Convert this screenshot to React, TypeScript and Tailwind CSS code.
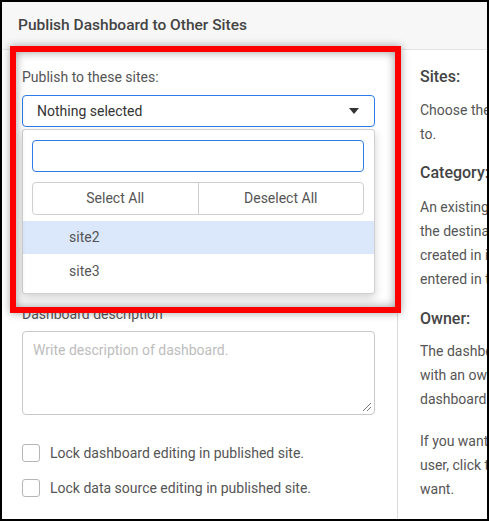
import React from "react";

function Caret() {
  return (
    <svg width="10" height="6" viewBox="0 0 10 6" className="shrink-0">
      <path d="M0 0 L10 0 L5 6 Z" fill="#333" />
    </svg>
  );
}

function Checkbox({ label }: { label: string }) {
  return (
    <div className="flex items-center h-[18px]">
      <span className="w-[18px] h-[18px] rounded-[3px] border border-[#b5b5b5] bg-white shrink-0" />
      <span className="ml-[10px] text-[14px] text-[#555] whitespace-nowrap">{label}</span>
    </div>
  );
}

export default function App() {
  return (
    <div
      className="relative w-[489px] h-[521px] overflow-hidden bg-white border-2 border-black"
      style={{ fontFamily: "Roboto, 'Liberation Sans', sans-serif" }}
    >
      {/* Header */}
      <div className="h-[48px] bg-[#f7f7f7] border-b border-[#e3e3e3] flex items-center pl-[16px]">
        <span className="text-[15.5px] font-medium text-[#444]">Publish Dashboard to Other Sites</span>
      </div>

      {/* Body */}
      <div className="flex h-[469px]">
        {/* Left form column */}
        <div className="relative w-[396px] shrink-0 border-r border-[#dcdcdc] pl-[20px] pt-[18px]">
          <div className="text-[14px] leading-[18px] text-[#555]">Publish to these sites:</div>
          <div className="mt-[9px] w-[353px] h-[32px] rounded-[4px] border border-[#2b7de9] flex items-center justify-between pl-[14px] pr-[15px]">
            <span className="text-[14px] text-[#333]">Nothing selected</span>
            <Caret />
          </div>
          <div className="h-[15px] text-[13px] leading-[15px] text-[#e53935]">
            Please select at least one publish site.
          </div>

          {/* Fields hidden behind the open menu */}
          <div className="mt-[6px] text-[14px] leading-[18px] text-[#555]">Category</div>
          <div className="mt-[8px] w-[353px] h-[32px] rounded-[4px] border border-[#ccc]" />
          <div className="mt-[23px] text-[14px] leading-[18px] text-[#555]">Owner</div>
          <div className="mt-[8px] w-[353px] h-[32px] rounded-[4px] border border-[#ccc]" />

          <div className="mt-[18px] text-[14px] leading-[18px] text-[#555]">Dashboard description</div>
          <div className="relative mt-[8px] w-[353px] h-[84px] rounded-[4px] border border-[#c8c8c8] px-[10px] pt-[6px]">
            <span className="text-[14px] text-[#bdbdbd]">Write description of dashboard.</span>
            <svg width="10" height="10" viewBox="0 0 10 10" className="absolute right-[2px] bottom-[2px]">
              <path d="M1 9 L9 1 M5 9 L9 5" stroke="#777" strokeWidth="1" />
            </svg>
          </div>

          <div className="mt-[29px]">
            <Checkbox label="Lock dashboard editing in published site." />
          </div>
          <div className="mt-[17px]">
            <Checkbox label="Lock data source editing in published site." />
          </div>

          {/* Open multiselect menu */}
          <div className="absolute left-[20px] top-[79px] w-[353px] h-[165px] bg-white border border-[#d0d0d0] rounded-[3px] shadow-[0_4px_10px_rgba(0,0,0,0.18)] pt-[10px]">
            <div className="mx-[9px] w-[332px] h-[32px] rounded-[4px] border border-[#2b7de9]" />
            <div className="mx-[9px] mt-[10px] w-[332px] h-[33px] rounded-[4px] border border-[#cfcfcf] flex">
              <div className="flex-1 flex items-center justify-center text-[14px] text-[#555] border-r border-[#cfcfcf]">
                Select All
              </div>
              <div className="flex-1 flex items-center justify-center text-[14px] text-[#555]">
                Deselect All
              </div>
            </div>
            <div className="mt-[6px] h-[33px] bg-[#dbe8fb] flex items-center pl-[46px] text-[14px] text-[#555]">
              site2
            </div>
            <div className="h-[34px] flex items-center pl-[46px] text-[14px] text-[#555]">site3</div>
          </div>
        </div>

        {/* Right help column */}
        <div className="flex-1 overflow-hidden pl-[22px] pt-[15px] text-[#555] whitespace-nowrap">
          <div className="text-[16px] leading-[24px] font-medium text-[#444]">Sites:</div>
          <p className="mt-[9px] text-[14px] leading-[24px]">
            Choose the sites you want to publish the dashboard
            <br />
            to.
          </p>
          <div className="mt-[15px] text-[16px] leading-[24px] font-medium text-[#444]">Category:</div>
          <p className="mt-[10px] text-[14px] leading-[24px]">
            An existing category with the same name in
            <br />
            the destination site will be used, or one will be
            <br />
            created in it with the category name that is
            <br />
            entered in the field.
          </p>
          <div className="mt-[16px] text-[16px] leading-[24px] font-medium text-[#444]">Owner:</div>
          <p className="mt-[8px] text-[14px] leading-[24px]">
            The dashboard will be published to the sites
            <br />
            with an owner you choose. The owner of the
            <br />
            dashboard can edit and share it.
          </p>
          <p className="mt-[18px] text-[14px] leading-[24px]">
            If you want to publish it as another
            <br />
            user, click the Owner field and pick the user you
            <br />
            want.
          </p>
        </div>
      </div>

      {/* Red highlight annotation */}
      <div className="absolute left-[8px] top-[44px] w-[391px] h-[267px] border-[6px] border-[#ff0000] shadow-[0_0_8px_rgba(0,0,0,0.35),inset_0_0_10px_rgba(0,0,0,0.4)] pointer-events-none" />
    </div>
  );
}
